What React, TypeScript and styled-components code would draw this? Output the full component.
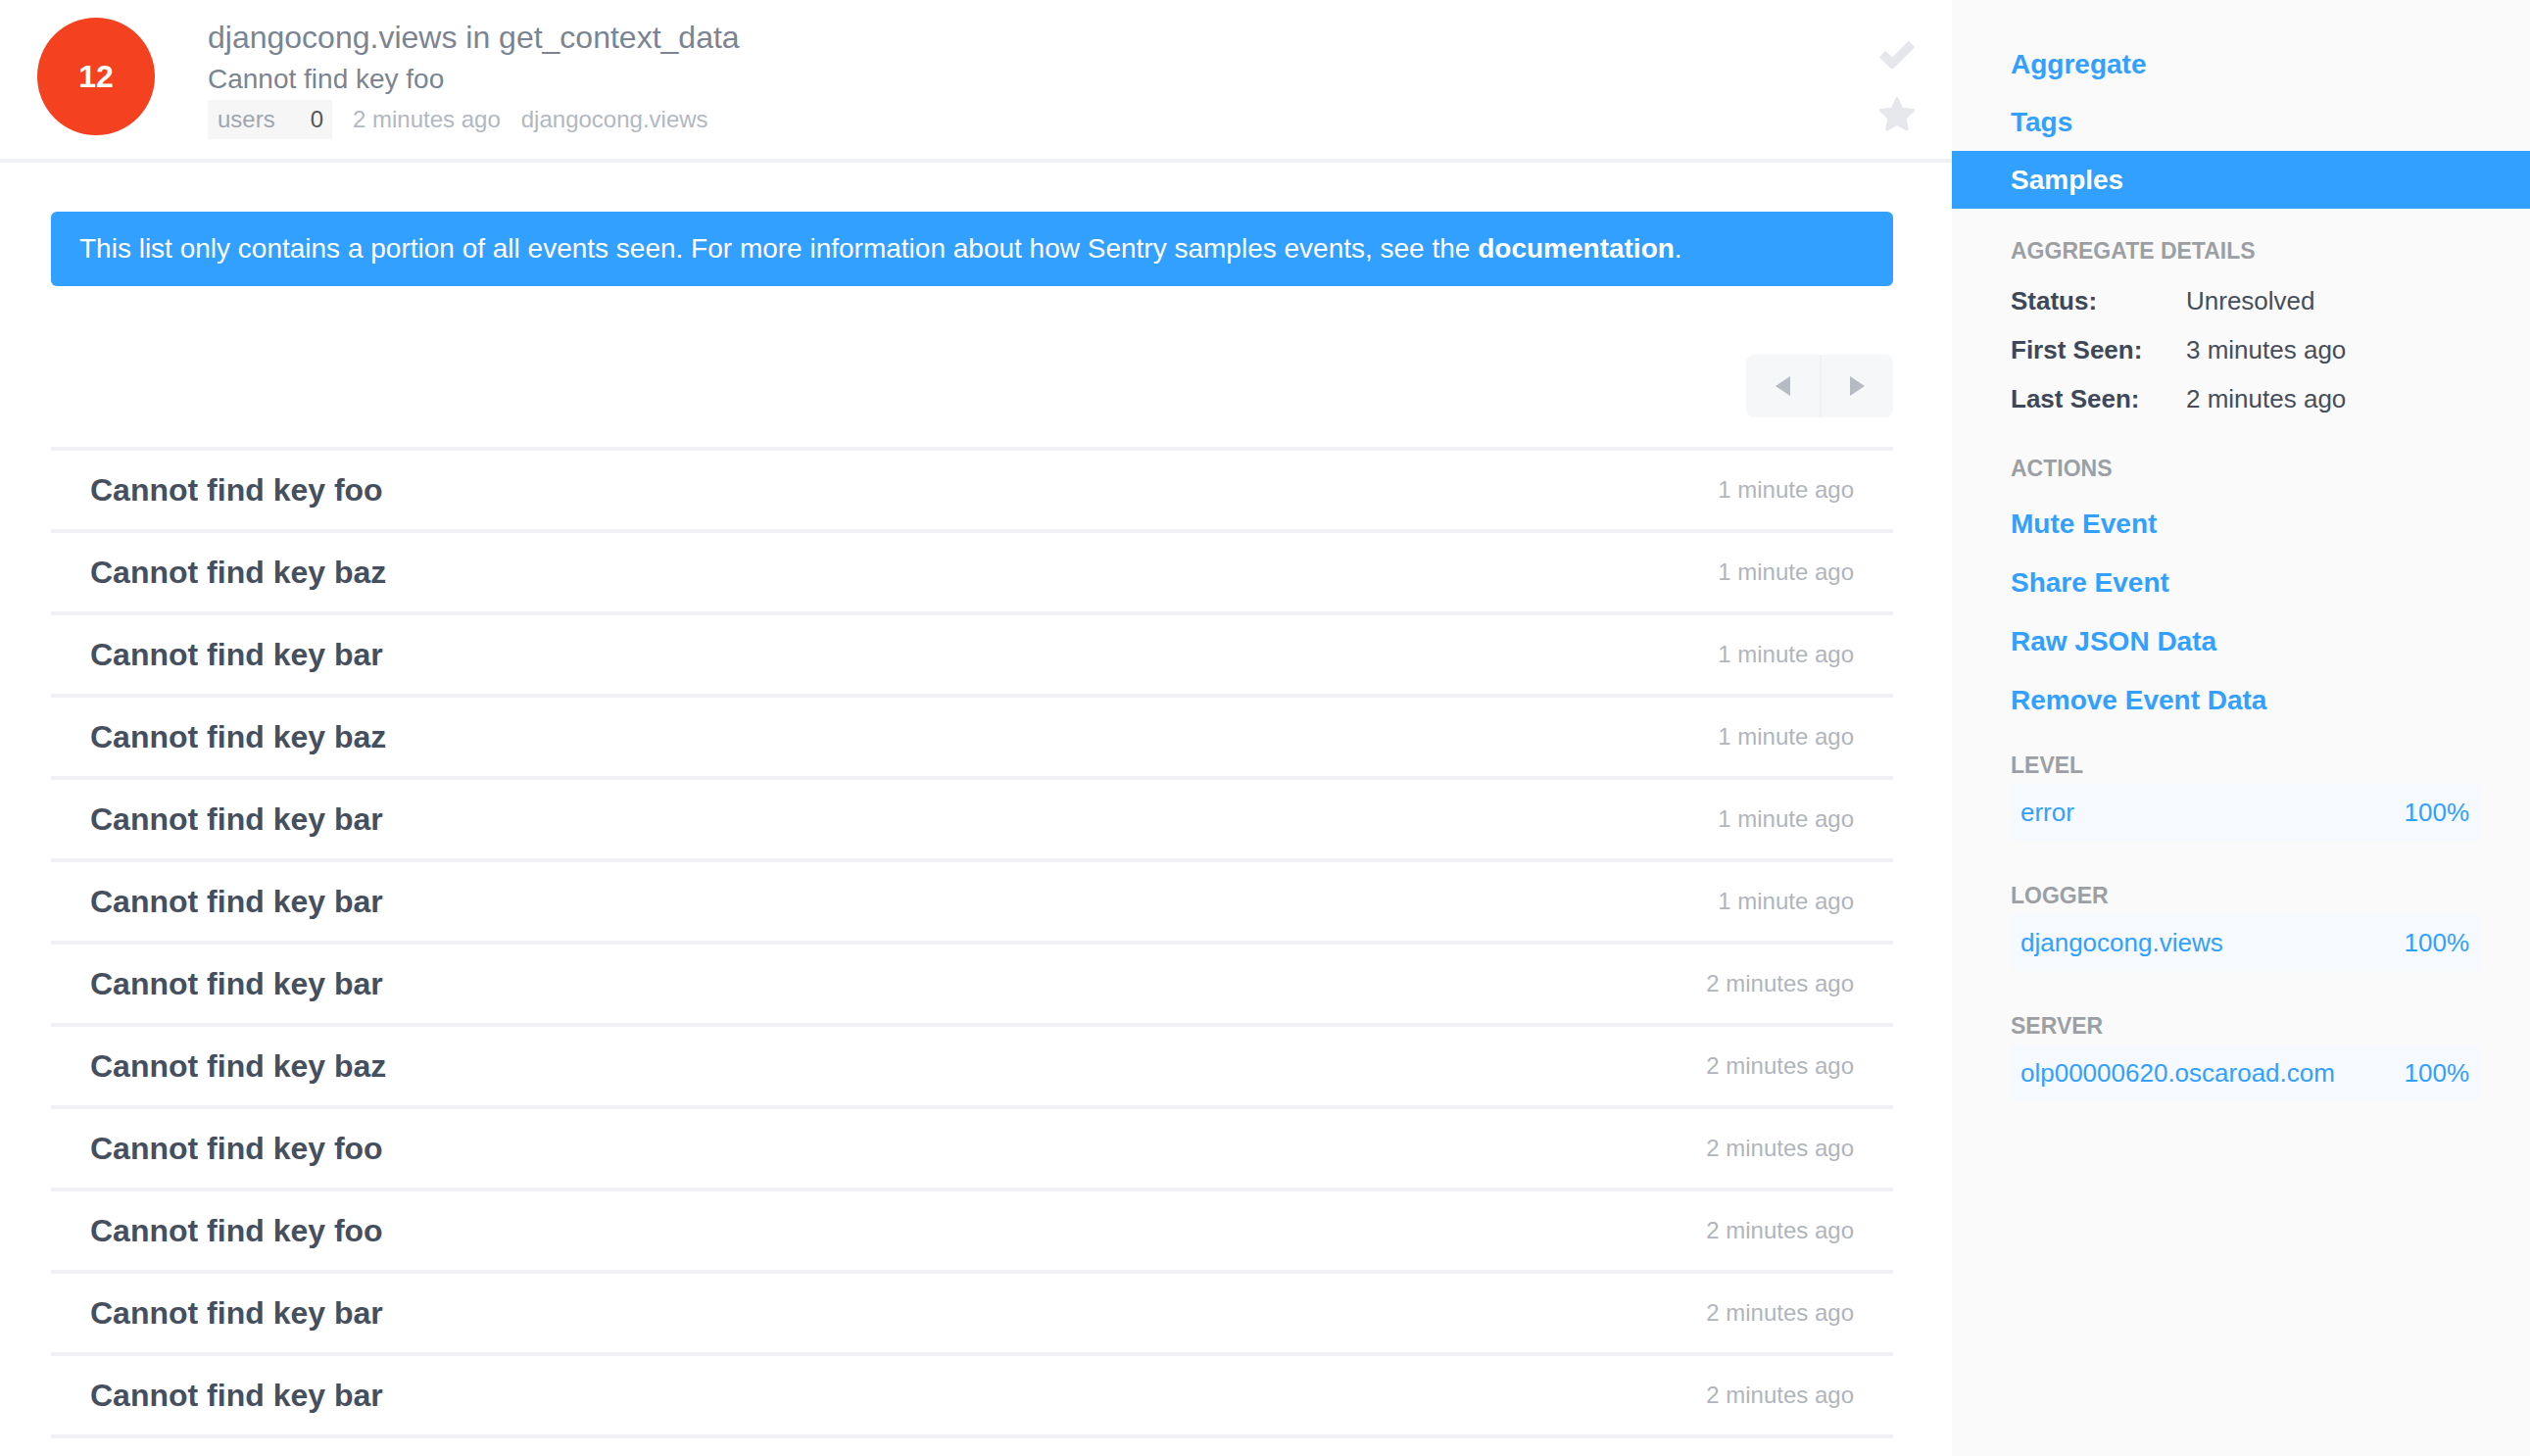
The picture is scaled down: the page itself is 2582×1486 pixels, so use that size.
import React from 'react';
import styled, { createGlobalStyle } from 'styled-components';

const GlobalStyle = createGlobalStyle`
  html, body {
    margin: 0;
    padding: 0;
    background: #fff;
  }
  body {
    font-family: "Liberation Sans", Arial, Helvetica, sans-serif;
  }
  * {
    box-sizing: border-box;
  }
`;

const BLUE = '#31a0fe';

const Layout = styled.div`
  display: flex;
  min-height: 100vh;
`;

const Main = styled.main`
  flex: 1;
  min-width: 0;
`;

const Header = styled.header`
  display: flex;
  height: 166px;
  padding: 18px 36px 0 38px;
  border-bottom: 4px solid #f1f2f6;
`;

const CountBadge = styled.div`
  width: 120px;
  height: 120px;
  border-radius: 50%;
  background: #f4411f;
  color: #fff;
  font-size: 32px;
  font-weight: 700;
  display: flex;
  align-items: center;
  justify-content: center;
  flex-shrink: 0;
`;

const HeaderText = styled.div`
  margin: 2px 0 0 54px;
  display: flex;
  flex-direction: column;
`;

const Title = styled.h1`
  margin: 0;
  font-size: 32px;
  line-height: 36px;
  font-weight: 400;
  color: #7b8492;
`;

const Subtitle = styled.div`
  margin-top: 7px;
  font-size: 28px;
  line-height: 36px;
  color: #7b8492;
`;

const Meta = styled.div`
  margin-top: 3px;
  display: flex;
  align-items: center;
  gap: 21px;
  font-size: 24px;
  line-height: 40px;
  color: #b2b8c1;
`;

const CountTag = styled.span`
  display: inline-flex;
  width: 127px;
  justify-content: space-between;
  padding: 0 9px 0 10px;
  background: #f6f6f6;
  color: #a0a5ad;

  b {
    font-weight: 400;
    color: #555;
  }
`;

const HeaderIcons = styled.div`
  margin-left: auto;
  padding-top: 21px;
  display: flex;
  flex-direction: column;
  align-items: center;
  gap: 28px;
  color: #e6e7eb;
`;

const Content = styled.div`
  padding: 50px 60px 0 52px;
`;

const Notice = styled.div`
  background: ${BLUE};
  color: #fff;
  border-radius: 6px;
  padding: 20px 29px;
  font-size: 28px;
  line-height: 36px;

  strong {
    font-weight: 700;
  }
`;

const PagerRow = styled.div`
  margin-top: 70px;
  display: flex;
  justify-content: flex-end;
`;

const Pager = styled.div`
  display: flex;
  background: #f5f7f8;
  border-radius: 8px;
  overflow: hidden;
`;

const PagerButton = styled.button<{ $divider?: boolean }>`
  width: 75px;
  height: 64px;
  border: 0;
  padding: 0;
  background: transparent;
  display: flex;
  align-items: center;
  justify-content: center;
  color: #b5bac3;
  border-left: ${(p) => (p.$divider ? '2px solid #eef0f1' : '0')};
`;

const EventList = styled.ul`
  list-style: none;
  margin: 30px 0 0;
  padding: 0;
  border-top: 4px solid #f1f1f5;
`;

const EventRow = styled.li`
  height: 84px;
  padding: 0 40px;
  display: flex;
  align-items: center;
  justify-content: space-between;
  border-bottom: 4px solid #f1f1f5;
`;

const EventTitle = styled.span`
  font-size: 32px;
  font-weight: 700;
  color: #454f5e;
`;

const EventTime = styled.span`
  font-size: 24px;
  color: #b0b5bd;
`;

const Sidebar = styled.aside`
  width: 590px;
  flex-shrink: 0;
  background: #fafafa;
  padding-top: 36px;
`;

const NavItem = styled.a<{ $active?: boolean }>`
  display: block;
  height: 59px;
  line-height: 59px;
  padding-left: 60px;
  font-size: 28px;
  font-weight: 700;
  text-decoration: none;
  color: ${(p) => (p.$active ? '#fff' : BLUE)};
  background: ${(p) => (p.$active ? BLUE : 'transparent')};
`;

const SideBody = styled.div`
  padding: 0 51px 0 60px;
`;

const SectionTitle = styled.h6<{ $top: number; $bottom: number }>`
  margin: ${(p) => `${p.$top}px 0 ${p.$bottom}px`};
  font-size: 23px;
  line-height: 30px;
  font-weight: 700;
  text-transform: uppercase;
  color: #9c9fa3;
`;

const DetailGrid = styled.dl`
  margin: 0;
  display: grid;
  grid-template-columns: 179px 1fr;
  font-size: 26px;
  line-height: 50px;

  dt {
    font-weight: 700;
    color: #3f4858;
  }
  dd {
    margin: 0;
    color: #464e5b;
  }
`;

const ActionLink = styled.a`
  display: block;
  height: 60px;
  line-height: 60px;
  font-size: 28px;
  font-weight: 700;
  color: ${BLUE};
  text-decoration: none;
`;

const TagValue = styled.div`
  height: 58px;
  display: flex;
  align-items: center;
  justify-content: space-between;
  padding: 0 11px 0 10px;
  background: #f6f9fd;
  border-radius: 6px;
  font-size: 26px;
  color: ${BLUE};
`;

const CheckIcon = () => (
  <svg width="38" height="31" viewBox="0 0 38 31">
    <polyline points="4,16 14,26 34,6" fill="none" stroke="currentColor" strokeWidth="9" strokeLinejoin="miter" />
  </svg>
);

const StarIcon = () => (
  <svg width="40" height="39" viewBox="0 0 40 39">
    <polygon
      points="20,2.5 24.9,13.3 36.6,14.6 27.9,22.6 30.3,34.1 20,28.2 9.7,34.1 12.1,22.6 3.4,14.6 15.1,13.3"
      fill="currentColor"
      stroke="currentColor"
      strokeWidth="3"
      strokeLinejoin="round"
    />
  </svg>
);

const Triangle = ({ dir }: { dir: 'left' | 'right' }) => (
  <svg width="15" height="20" viewBox="0 0 15 20">
    <polygon points={dir === 'left' ? '15,0 15,20 0,10' : '0,0 0,20 15,10'} fill="currentColor" />
  </svg>
);

const events = [
  { key: 'foo', time: '1 minute ago' },
  { key: 'baz', time: '1 minute ago' },
  { key: 'bar', time: '1 minute ago' },
  { key: 'baz', time: '1 minute ago' },
  { key: 'bar', time: '1 minute ago' },
  { key: 'bar', time: '1 minute ago' },
  { key: 'bar', time: '2 minutes ago' },
  { key: 'baz', time: '2 minutes ago' },
  { key: 'foo', time: '2 minutes ago' },
  { key: 'foo', time: '2 minutes ago' },
  { key: 'bar', time: '2 minutes ago' },
  { key: 'bar', time: '2 minutes ago' },
];

const tags = [
  { name: 'Level', value: 'error', top: 21 },
  { name: 'Logger', value: 'djangocong.views', top: 41 },
  { name: 'Server', value: 'olp00000620.oscaroad.com', top: 41 },
];

export default function App() {
  return (
    <>
      <GlobalStyle />
      <Layout>
        <Main>
          <Header>
            <CountBadge>12</CountBadge>
            <HeaderText>
              <Title>djangocong.views in get_context_data</Title>
              <Subtitle>Cannot find key foo</Subtitle>
              <Meta>
                <CountTag>
                  users <b>0</b>
                </CountTag>
                <span>2 minutes ago</span>
                <span>djangocong.views</span>
              </Meta>
            </HeaderText>
            <HeaderIcons>
              <CheckIcon />
              <StarIcon />
            </HeaderIcons>
          </Header>

          <Content>
            <Notice>
              This list only contains a portion of all events seen. For more information about how Sentry
              samples events, see the <strong>documentation</strong>.
            </Notice>

            <PagerRow>
              <Pager>
                <PagerButton aria-label="Previous">
                  <Triangle dir="left" />
                </PagerButton>
                <PagerButton $divider aria-label="Next">
                  <Triangle dir="right" />
                </PagerButton>
              </Pager>
            </PagerRow>

            <EventList>
              {events.map((e, i) => (
                <EventRow key={i}>
                  <EventTitle>Cannot find key {e.key}</EventTitle>
                  <EventTime>{e.time}</EventTime>
                </EventRow>
              ))}
            </EventList>
          </Content>
        </Main>

        <Sidebar>
          <nav>
            <NavItem href="#">Aggregate</NavItem>
            <NavItem href="#">Tags</NavItem>
            <NavItem href="#" $active>
              Samples
            </NavItem>
          </nav>
          <SideBody>
            <SectionTitle $top={28} $bottom={11}>
              Aggregate Details
            </SectionTitle>
            <DetailGrid>
              <dt>Status:</dt>
              <dd>Unresolved</dd>
              <dt>First Seen:</dt>
              <dd>3 minutes ago</dd>
              <dt>Last Seen:</dt>
              <dd>2 minutes ago</dd>
            </DetailGrid>

            <SectionTitle $top={31} $bottom={12}>
              Actions
            </SectionTitle>
            <ActionLink href="#">Mute Event</ActionLink>
            <ActionLink href="#">Share Event</ActionLink>
            <ActionLink href="#">Raw JSON Data</ActionLink>
            <ActionLink href="#">Remove Event Data</ActionLink>

            {tags.map((t) => (
              <div key={t.name}>
                <SectionTitle $top={t.top} $bottom={4}>
                  {t.name}
                </SectionTitle>
                <TagValue>
                  <span>{t.value}</span>
                  <span>100%</span>
                </TagValue>
              </div>
            ))}
          </SideBody>
        </Sidebar>
      </Layout>
    </>
  );
}
